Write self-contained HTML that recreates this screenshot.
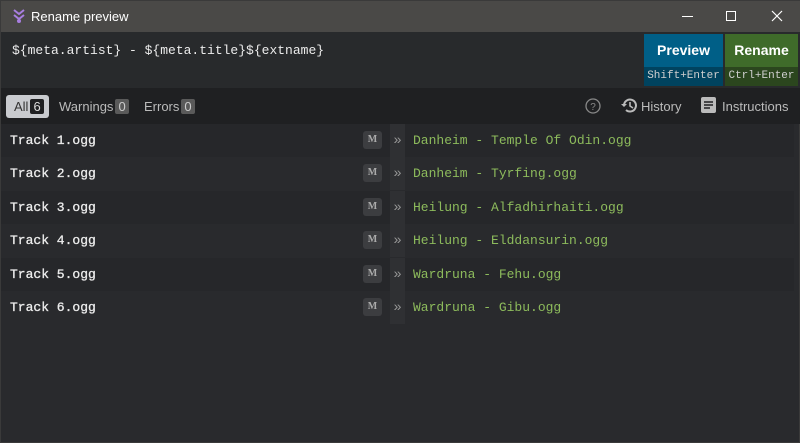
<!DOCTYPE html>
<html><head><style>
*{margin:0;padding:0;box-sizing:border-box}
body{width:800px;height:443px;background:#292a2d;overflow:hidden;font-family:"Liberation Sans",sans-serif;position:relative;border:1px solid #3a3a3a}
.tb{position:absolute;left:0;top:0;width:800px;height:31px;background:#4a4947;color:#fff;font-size:13px}
.tb .t{position:absolute;left:30px;top:8px}
.top{position:absolute;left:0;top:31px;width:800px;height:56px;background:#282a2c}
.tpl{position:absolute;left:11px;top:11px;font-family:"Liberation Mono",monospace;font-size:13px;color:#ececec}
.btn{position:absolute;top:2px;height:52px;width:79px;text-align:center}
.btn .a{height:33px;line-height:33px;font-weight:bold;color:#fff;font-size:14px}
.btn .b{height:19px;line-height:19px;font-family:"Liberation Mono",monospace;font-size:11px;color:#cfcfcf}
.tabs{position:absolute;left:0;top:87px;width:800px;height:36px;background:#1f2022;color:#bbb;font-size:13px}
.tab{position:absolute;top:7px;height:23px;line-height:23px}
.badge{display:inline-block;background:#5a5a5a;color:#ccc;padding:0 3px;line-height:15px;border-radius:2px;margin-left:2px}
.row{position:absolute;left:0;width:793px;height:33px}
.row.o{background:#26272a}
.n{position:absolute;left:9px;top:9px;font-family:"Liberation Mono",monospace;font-size:13px;color:#ececec;-webkit-text-stroke:0.3px #ececec}
.m{position:absolute;left:362px;top:7px;width:19px;height:18px;background:#3c3d40;border-radius:3px;color:#aaa;font-size:10px;font-weight:bold;text-align:center;line-height:18px;font-family:"Liberation Serif",serif}
.ar{position:absolute;left:389px;top:0;width:15px;height:33px;background:#2f3033;color:#999;font-size:14px;text-align:center;line-height:31px}
.r{position:absolute;left:412px;top:9px;font-family:"Liberation Mono",monospace;font-size:13px;color:#8dbb5c}
</style></head><body>
<div class="tb">
<svg style="position:absolute;left:11px;top:7px" width="14" height="16" viewBox="0 0 14 16"><path d="M2 2l5 4 5-4M2 7l5 4 5-4" stroke="#a87ee0" stroke-width="2" fill="none"/><circle cx="7" cy="13" r="2" fill="#a87ee0"/></svg>
<span class="t">Rename preview</span>
<div style="position:absolute;left:681px;top:15px;width:11px;height:1px;background:#fff"></div>
<div style="position:absolute;left:725px;top:10px;width:10px;height:10px;border:1px solid #fff"></div>
<svg style="position:absolute;left:770px;top:9px" width="12" height="12"><path d="M1 1L11 11M11 1L1 11" stroke="#fff" stroke-width="1.2"/></svg>
</div>
<div class="top">
<div class="tpl">${meta.artist} - ${meta.title}${extname}</div>
<div class="btn" style="left:643px;background:#005f87"><div class="a">Preview</div><div class="b" style="background:#00435f">Shift+Enter</div></div>
<div class="btn" style="left:724px;width:73px;background:#3f6b2a"><div class="a">Rename</div><div class="b" style="background:#2b461e">Ctrl+Enter</div></div>
</div>
<div class="tabs">
<div class="tab" style="left:5px;width:43px;background:#c9cbcf;border-radius:3px;color:#333;padding-left:8px">All<span class="badge" style="background:#1f2022;color:#ddd">6</span></div>
<div class="tab" style="left:58px">Warnings<span class="badge">0</span></div>
<div class="tab" style="left:143px">Errors<span class="badge">0</span></div>
<svg style="position:absolute;left:584px;top:10px" width="16" height="16"><circle cx="8" cy="8" r="7" stroke="#888" stroke-width="1.3" fill="none"/><text x="8" y="12" font-size="10" fill="#888" text-anchor="middle" font-family="Liberation Sans">?</text></svg>
<svg style="position:absolute;left:619px;top:9px" width="18" height="17"><path d="M4 8a6 6 0 1 1 2 5" stroke="#bbb" stroke-width="2" fill="none"/><path d="M1 7l3 3 3-3" fill="#bbb"/><path d="M10 5v4l3 2" stroke="#bbb" stroke-width="1.6" fill="none"/></svg>
<div class="tab" style="left:640px">History</div>
<svg style="position:absolute;left:700px;top:9px" width="15" height="16"><rect width="15" height="16" rx="2" fill="#bbb"/><path d="M3 5h9M3 8h9M3 11h6" stroke="#1f2022" stroke-width="1.5"/></svg>
<div class="tab" style="left:721px">Instructions</div>
</div>
<div class="row o" style="top:123px"><div class="n">Track 1.ogg</div><div class="m">M</div><div class="ar">»</div><div class="r">Danheim - Temple Of Odin.ogg</div></div>
<div class="row" style="top:156px"><div class="n">Track 2.ogg</div><div class="m">M</div><div class="ar">»</div><div class="r">Danheim - Tyrfing.ogg</div></div>
<div class="row o" style="top:190px"><div class="n">Track 3.ogg</div><div class="m">M</div><div class="ar">»</div><div class="r">Heilung - Alfadhirhaiti.ogg</div></div>
<div class="row" style="top:223px"><div class="n">Track 4.ogg</div><div class="m">M</div><div class="ar">»</div><div class="r">Heilung - Elddansurin.ogg</div></div>
<div class="row o" style="top:257px"><div class="n">Track 5.ogg</div><div class="m">M</div><div class="ar">»</div><div class="r">Wardruna - Fehu.ogg</div></div>
<div class="row" style="top:290px"><div class="n">Track 6.ogg</div><div class="m">M</div><div class="ar">»</div><div class="r">Wardruna - Gibu.ogg</div></div>
</body></html>
